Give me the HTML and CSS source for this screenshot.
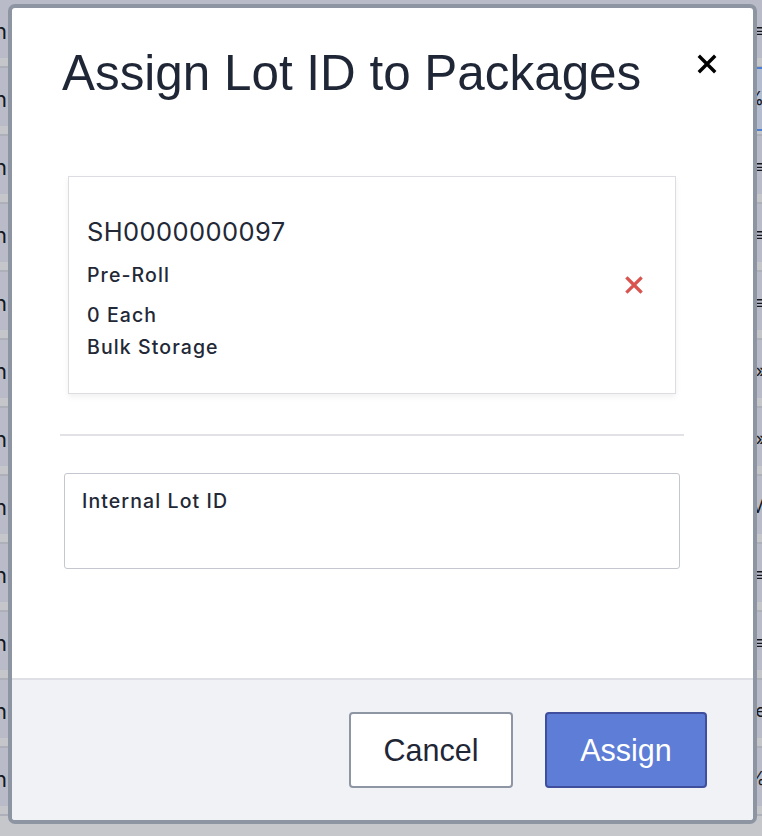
FILE: index.html
```html
<!DOCTYPE html>
<html>
<head>
<meta charset="utf-8">
<link rel="stylesheet" href="styles.css">
</head>
<body>
<div class="table">
  <div class="row"><span class="l">n</span><span class="r">≡</span></div>
  <div class="row"><span class="l">n</span><span class="r sel">%</span></div>
  <div class="row"><span class="l">n</span><span class="r">≡</span></div>
  <div class="row"><span class="l">n</span><span class="r">≡</span></div>
  <div class="row"><span class="l">n</span><span class="r">≡</span></div>
  <div class="row"><span class="l">n</span><span class="r">»</span></div>
  <div class="row"><span class="l">n</span><span class="r">»</span></div>
  <div class="row"><span class="l">n</span><span class="r">M</span></div>
  <div class="row"><span class="l">n</span><span class="r">≡</span></div>
  <div class="row"><span class="l">n</span><span class="r">≡</span></div>
  <div class="row"><span class="l">n</span><span class="r">e</span></div>
  <div class="row"><span class="l">n</span><span class="r">%</span></div>
</div>

<div class="modal">
  <div class="modal-body">
    <div class="head">
      <h1 class="title">Assign Lot ID to Packages</h1>
      <button class="close" aria-label="Close">
        <svg width="20" height="20" viewBox="0 0 20 20"><path d="M3 3L17 17M17 3L3 17" stroke="#000" stroke-width="3.4" stroke-linecap="square"/></svg>
      </button>
    </div>
    <div class="card">
      <div class="info">
        <div class="pkg">SH0000000097</div>
        <div class="line type">Pre-Roll</div>
        <div class="line qty">0 Each</div>
        <div class="line">Bulk Storage</div>
      </div>
      <button class="remove" aria-label="Remove">
        <svg width="18" height="18" viewBox="0 0 18 18"><path d="M2.5 2.5L15.5 15.5M15.5 2.5L2.5 15.5" stroke="#d9534f" stroke-width="3.2" stroke-linecap="square"/></svg>
      </button>
    </div>
    <div class="divider"></div>
    <div class="field">
      <label class="label">Internal Lot ID</label>
    </div>
  </div>
  <div class="footer">
    <button class="btn cancel">Cancel</button>
    <button class="btn assign">Assign</button>
  </div>
</div>
</body>
</html>
```

FILE: styles.css
```css
html, body {
  margin: 0;
  padding: 0;
  height: 100%;
  overflow: hidden;
}
body {
  background: #c6c7cb;
  font-family: "Inter", "Liberation Sans", sans-serif;
  color: #222836;
}
.table {
  display: flex;
  flex-direction: column;
}
.row {
  height: 68px;
  box-sizing: border-box;
  display: flex;
  justify-content: space-between;
  align-items: center;
  background: linear-gradient(#b9bcc8 0, #b9bcc8 58px, #c4c6ca 58px, #c4c6ca 66px, #adb0b8 66px, #adb0b8 68px);
  font-size: 22px;
  color: #15171c;
}
.row .l { margin-left: -6px; margin-top: -6px; }
.row .r {
  margin-right: -4px;
  margin-top: -6px;
  font-size: 18px;
  height: 60px;
  line-height: 60px;
}
.row .r.sel {
  border-top: 2px solid #4c7fd0;
  border-bottom: 2px solid #4c7fd0;
  background: #b4bccf;
  padding: 0 2px;
}

.modal {
  position: absolute;
  left: 8px;
  top: 4px;
  width: 749px;
  height: 820px;
  box-sizing: border-box;
  border: 4px solid #8e95a2;
  border-radius: 7px;
  background: #fff;
  display: flex;
  flex-direction: column;
  overflow: hidden;
}
.modal-body {
  flex: 1;
  padding: 0 0 0 48px;
}
.head {
  display: flex;
  justify-content: space-between;
  align-items: flex-start;
  padding-right: 36px;
}
.title {
  margin: 33px 0 0 2px;
  font-family: "Liberation Sans", "Inter", sans-serif;
  font-weight: 400;
  font-size: 49.4px;
  line-height: 64px;
  color: #1f2636;
}
.close {
  margin-top: 46px;
  border: 0;
  background: none;
  padding: 0;
  width: 20px;
  height: 20px;
}
.card {
  margin: 71px 0 0 8px;
  width: 608px;
  height: 218px;
  box-sizing: border-box;
  border: 1px solid #dcdce2;
  box-shadow: 0 3px 6px rgba(0, 0, 0, 0.06);
  display: flex;
  align-items: center;
  justify-content: space-between;
  padding: 10px 32px 0 18px;
}
.remove {
  margin-top: -10px;
  border: 0;
  background: none;
  padding: 0;
  width: 18px;
  height: 18px;
}
.pkg {
  font-size: 25.5px;
  line-height: 30px;
  font-weight: 400;
  letter-spacing: 0.4px;
  color: #222836;
  margin-bottom: 12px;
}
.line {
  font-size: 19.5px;
  font-weight: 500;
  letter-spacing: 1.1px;
  line-height: 32px;
}
.type { margin-bottom: 8px; }
.divider {
  margin: 40px 0 0 0;
  width: 624px;
  height: 2px;
  background: #e2e2e6;
}
.field {
  margin: 37px 0 0 4px;
  width: 616px;
  height: 96px;
  box-sizing: border-box;
  border: 1.5px solid #c4c7cf;
  border-radius: 3px;
  padding: 15px 17px 12px;
}
.label {
  font-size: 19.5px;
  font-weight: 500;
  letter-spacing: 1.1px;
  color: #222836;
}
.footer {
  height: 142px;
  box-sizing: border-box;
  border-top: 2px solid #dfe0e6;
  background: #f1f2f6;
  display: flex;
  justify-content: flex-end;
  align-items: flex-start;
  gap: 32px;
  padding: 32px 46px 0 0;
}
.btn {
  height: 76px;
  box-sizing: border-box;
  border-radius: 4px;
  font-family: "Liberation Sans", "Inter", sans-serif;
  font-size: 30.5px;
  padding: 0;
}
.cancel {
  width: 164px;
  background: #fff;
  border: 2px solid #8e95a3;
  color: #1f2636;
}
.assign {
  width: 162px;
  background: #5d7dd6;
  border: 2px solid #3f4f9e;
  color: #fff;
}
```
